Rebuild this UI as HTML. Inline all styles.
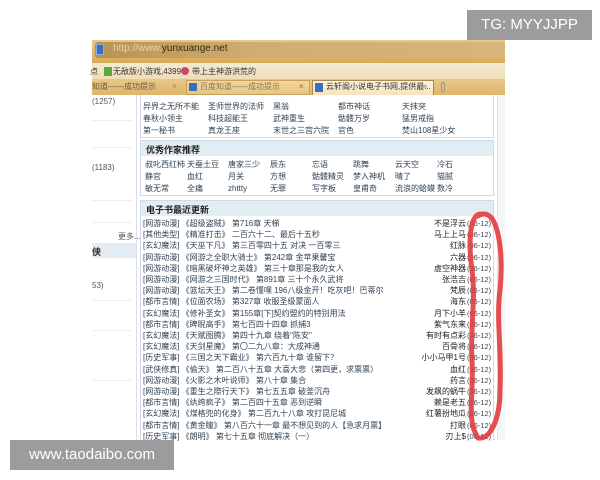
<!DOCTYPE html>
<html><head><meta charset="utf-8"><style>
*{margin:0;padding:0;box-sizing:border-box}
body{width:600px;height:480px;background:#fff;position:relative;overflow:hidden;font-family:"Liberation Sans","Noto Sans CJK SC",sans-serif;}
.a{position:absolute;white-space:nowrap}
.t{font-size:8px;color:#345;line-height:11px}
.g{color:#555}
</style></head><body>
<!-- browser chrome -->
<div class="a" style="left:92px;top:40px;width:413px;height:23px;background:linear-gradient(#e9c98e,#d9a957);"></div>
<div class="a" style="left:95px;top:42px;width:410px;height:16px;background:linear-gradient(90deg,#b89253,#cfae72 40%,#d8b57a);border-radius:3px;"></div>
<div class="a" style="left:96px;top:44px;width:8px;height:11px;background:#3a6fc0;border:1px solid #8bb0e0"></div>
<div class="a" style="left:113px;top:43px;font-size:10px;color:#e8d2a8">http://www.<span style="color:#3a2a10">yunxuange.net</span></div>
<div class="a" style="left:92px;top:63px;width:413px;height:17px;background:linear-gradient(#f4ead4,#efdcb2);"></div>
<div class="a t" style="left:90px;top:66px;color:#333">点</div>
<div class="a" style="left:104px;top:67px;width:8px;height:9px;background:#5aa83a"></div>
<div class="a t" style="left:113px;top:66px;color:#333">无敌版小游戏,4399</div>
<div class="a" style="left:181px;top:67px;width:8px;height:8px;border-radius:50%;background:#c84a6a"></div>
<div class="a t" style="left:192px;top:66px;color:#333">带上主神游洪荒的</div>
<div class="a" style="left:92px;top:79px;width:413px;height:16px;background:linear-gradient(#e8c88a,#dfb56a);"></div>
<div class="a t" style="left:92px;top:81px;width:92px;color:#6a5a40">知道——成功提示<span style="position:absolute;left:80px;color:#888">×</span></div>
<div class="a t" style="left:186px;top:80px;width:124px;height:15px;background:linear-gradient(#f2d89e,#e7c582);padding-left:13px;color:#8a7450;border:1px solid #c9a060">百度知道——成功提示<span style="position:absolute;left:112px;color:#b44">×</span></div>
<div class="a" style="left:189px;top:83px;width:8px;height:8px;background:#3a6fc0"></div>
<div class="a t" style="left:312px;top:80px;width:122px;height:16px;background:linear-gradient(#fbf3e0,#f3e2bc);padding-left:13px;color:#333;border:1px solid #a98a50;border-bottom:none">云轩阁小说电子书网,提供最...<span style="position:absolute;left:110px;color:#888">×</span></div>
<div class="a" style="left:315px;top:83px;width:8px;height:9px;background:#3a6fc0"></div>
<div class="a" style="left:441px;top:82px;width:4px;height:10px;border:1px solid #998;border-radius:3px"></div>
<!-- content -->
<div class="a" style="left:92px;top:95px;width:413px;height:345px;background:#fff"></div>
<div class="a" style="left:497px;top:95px;width:8px;height:345px;background:#f4f6f8;border-left:1px solid #e0e4e8"></div>
<div class="a" style="left:136px;top:95px;width:1px;height:345px;background:#dde"></div>
<!-- left col -->
<div class="a t g" style="left:92px;top:96px">(1257)</div>
<div class="a t g" style="left:92px;top:162px">(1183)</div>
<div class="a t g" style="left:92px;top:280px">53)</div>
<div class="a t g" style="left:118px;top:231px">更多...</div>
<div class="a" style="left:92px;top:243px;width:44px;height:15px;background:#e4edf3;font-size:9px;font-weight:bold;padding-top:2px;color:#222">侠</div>
<div class="a" style="left:92px;top:120px;width:40px;height:1px;background:#eee"></div>
<div class="a" style="left:92px;top:147px;width:40px;height:1px;background:#eee"></div>
<div class="a" style="left:92px;top:200px;width:40px;height:1px;background:#eee"></div>
<div class="a" style="left:92px;top:222px;width:40px;height:1px;background:#eee"></div>
<div class="a" style="left:92px;top:300px;width:40px;height:1px;background:#eee"></div>
<div class="a" style="left:92px;top:330px;width:40px;height:1px;background:#eee"></div>
<div class="a" style="left:92px;top:380px;width:40px;height:1px;background:#eee"></div>
<!-- section 1 -->
<div class="a" style="left:140px;top:95px;width:354px;height:43px;border:1px solid #cfdbe4;border-top:none"></div>
<div class="a t" style="left:143px;top:101px">异界之无所不能</div><div class="a t" style="left:208px;top:101px">圣师世界的法师</div><div class="a t" style="left:273px;top:101px">黑翁</div><div class="a t" style="left:338px;top:101px">都市神话</div><div class="a t" style="left:402px;top:101px">天抹突</div>
<div class="a t" style="left:143px;top:113px">春秋小领主</div><div class="a t" style="left:208px;top:113px">科技超能王</div><div class="a t" style="left:273px;top:113px">武神重生</div><div class="a t" style="left:338px;top:113px">骷髅万岁</div><div class="a t" style="left:402px;top:113px">猛男戒指</div>
<div class="a t" style="left:143px;top:125px">第一秘书</div><div class="a t" style="left:208px;top:125px">真龙王座</div><div class="a t" style="left:273px;top:125px">末世之三宫六院</div><div class="a t" style="left:338px;top:125px">官色</div><div class="a t" style="left:402px;top:125px">焚山108星少女</div>
<!-- section 2 -->
<div class="a" style="left:140px;top:140px;width:354px;height:56px;border:1px solid #cfdbe4"></div>
<div class="a" style="left:141px;top:141px;width:352px;height:15px;background:#e2ecf3;font-size:9px;font-weight:bold;padding:2px 0 0 5px;color:#222">优秀作家推荐</div>
<div class="a t" style="left:145px;top:159px">叔叱西红柿</div><div class="a t" style="left:187px;top:159px">天蚕土豆</div><div class="a t" style="left:228px;top:159px">唐家三少</div><div class="a t" style="left:270px;top:159px">辰东</div><div class="a t" style="left:312px;top:159px">忘语</div><div class="a t" style="left:353px;top:159px">跳舞</div><div class="a t" style="left:395px;top:159px">云天空</div><div class="a t" style="left:437px;top:159px">冷石</div>
<div class="a t" style="left:145px;top:171px">静官</div><div class="a t" style="left:187px;top:171px">血红</div><div class="a t" style="left:228px;top:171px">月关</div><div class="a t" style="left:270px;top:171px">方想</div><div class="a t" style="left:312px;top:171px">骷髅精灵</div><div class="a t" style="left:353px;top:171px">梦入神机</div><div class="a t" style="left:395px;top:171px">晴了</div><div class="a t" style="left:437px;top:171px">猫腻</div>
<div class="a t" style="left:145px;top:183px">敏无常</div><div class="a t" style="left:187px;top:183px">全痛</div><div class="a t" style="left:228px;top:183px">zhttty</div><div class="a t" style="left:270px;top:183px">无罪</div><div class="a t" style="left:312px;top:183px">写字板</div><div class="a t" style="left:353px;top:183px">皇甫奇</div><div class="a t" style="left:395px;top:183px">流浪的蛤蟆</div><div class="a t" style="left:437px;top:183px">数冷</div>
<!-- section 3 -->
<div class="a" style="left:140px;top:200px;width:354px;height:240px;border:1px solid #cfdbe4;border-bottom:none"></div>
<div class="a" style="left:141px;top:201px;width:352px;height:15px;background:#e2ecf3;font-size:9px;font-weight:bold;padding:2px 0 0 5px;color:#222">电子书最近更新</div>
<div class="a" style="left:143px;top:218px;font-size:8px;line-height:11.2px;color:#345">
<div>[网游动漫] 《超级盗贼》 第716章 天梯</div>
<div>[其他类型] 《精准打击》 二百六十二、最后十五秒</div>
<div>[玄幻魔法] 《天巫下凡》 第三百零四十五 对决 一百零三</div>
<div>[网游动漫] 《网游之全职大骑士》 第242章 金苹果馨宝</div>
<div>[网游动漫] 《暗黑破坏神之英雄》 第三十章那是我的女人</div>
<div>[网游动漫] 《网游之三国时代》 第891章 三十个永久武将</div>
<div>[网游动漫] 《篮坛天王》 第二卷懂嘿 196八级金开！吃灰吧！巴蒂尔</div>
<div>[都市言情] 《位面农场》 第327章 收服圣级蒙面人</div>
<div>[玄幻魔法] 《修补圣女》 第155章[下]契约盟约的特别用法</div>
<div>[都市言情] 《睥睨高手》 第七百四十四章 抓捕3</div>
<div>[玄幻魔法] 《天赋图腾》 第四十九章 绕着"陈安"</div>
<div>[玄幻魔法] 《天剑星魔》 第〇二九八章：大成神通</div>
<div>[历史军事] 《三国之天下霸业》 第六百九十章 谁留下？</div>
<div>[武侠修真] 《偷天》 第二百八十五章 大喜大悲（第四更，求票票）</div>
<div>[网游动漫] 《火影之木叶说师》 第八十章 集合</div>
<div>[网游动漫] 《重生之際行天下》 第七五五章 破釜沉舟</div>
<div>[都市言情] 《纨绔疯子》 第二百四十五章 恶到逆瞬</div>
<div>[玄幻魔法] 《煤格兜的化身》 第二百九十八章 攻打昆尼城</div>
<div>[都市言情] 《黄金瞳》 第八百六十一章 最不想见到的人【急求月票】</div>
<div>[历史军事] 《朗明》 第七十五章 彻底解决（一）</div>
</div>
<div class="a" style="left:380px;top:218px;width:86px;font-size:8px;line-height:11.2px;color:#222;text-align:right">
<div>不是浮云</div><div>马上上马</div><div>红脉</div><div>六器</div><div>虚空神器</div><div>张浩吉</div><div>梵辰</div><div>海东</div><div>月下小羊</div><div>紫气东来</div><div>有时有点彩</div><div>百骨将</div><div>小小马甲1号</div><div>血红</div><div>药言</div><div>发飙的蜗牛</div><div>赖是老五</div><div>红薯扮地瓜</div><div>打眼</div><div>刃上$</div>
</div>
<div class="a" style="left:467px;top:218px;font-size:7.5px;line-height:11.2px;color:#445">
<div>(06-12)</div><div>(06-12)</div><div>(06-12)</div><div>(06-12)</div><div>(06-12)</div><div>(06-12)</div><div>(06-12)</div><div>(06-12)</div><div>(06-12)</div><div>(06-12)</div><div>(06-12)</div><div>(06-12)</div><div>(06-12)</div><div>(06-12)</div><div>(06-12)</div><div>(06-12)</div><div>(06-12)</div><div>(06-12)</div><div>(06-12)</div><div>(06-12)</div>
</div>
<svg class="a" style="left:0;top:0" width="600" height="480"><path d="M481 214 C470 214 468 240 472 270 C476 300 470 330 472 360 C474 395 466 420 478 438 C490 440 500 420 500 390 C502 350 496 320 500 290 C503 260 500 235 494 222 C490 214 484 212 478 216" fill="none" stroke="#e23c3c" stroke-width="5" stroke-linecap="round" opacity=".9"/></svg>
<!-- overlays -->
<div class="a" style="left:467px;top:10px;width:125px;height:30px;background:#9c9c9c;color:#fff;font-size:15px;line-height:30px;text-align:center">TG: MYYJJPP</div>
<div class="a" style="left:10px;top:440px;width:164px;height:30px;background:#9c9c9c;color:#fff;font-size:15px;line-height:30px;text-align:center">www.taodaibo.com</div>
</body></html>
